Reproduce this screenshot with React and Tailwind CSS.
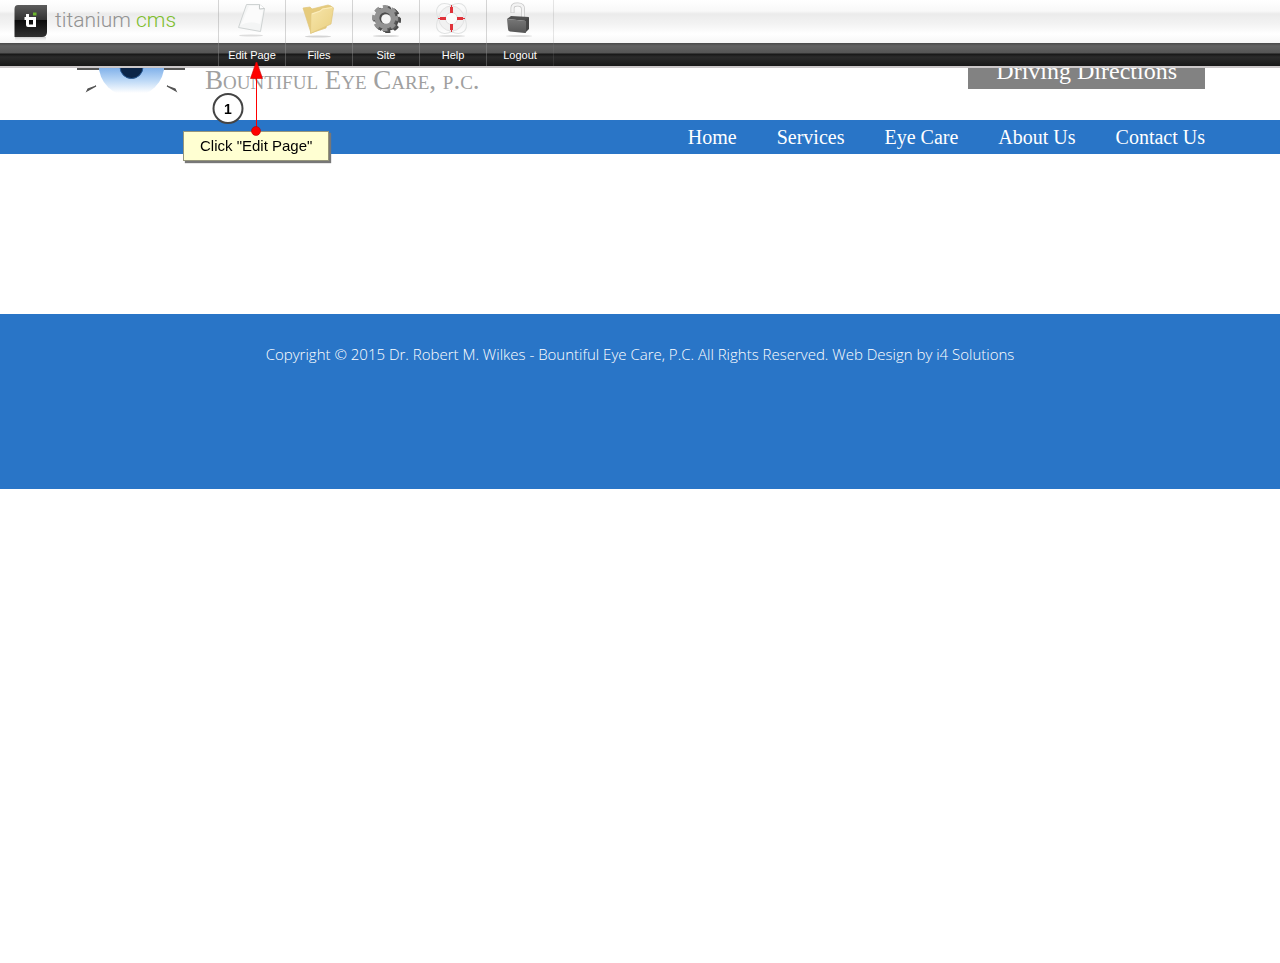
function TitaniumMark() {
  return (
    <svg width="34" height="42" viewBox="0 0 34 42" aria-hidden="true">
      <defs>
        <linearGradient id="mark" x1="0" y1="0" x2="0" y2="1">
          <stop offset="0" stopColor="#5c5c5c" />
          <stop offset="0.46" stopColor="#333" />
          <stop offset="0.48" stopColor="#0c0c0c" />
          <stop offset="1" stopColor="#303030" />
        </linearGradient>
        <linearGradient id="markShade" x1="0" y1="0" x2="0" y2="1">
          <stop offset="0" stopColor="#ccc" />
          <stop offset="1" stopColor="#fff" stopOpacity="0" />
        </linearGradient>
      </defs>
      <rect x="2" y="37" width="31" height="5" fill="url(#markShade)" />
      <path d="M5 5H34V32Q34 37 29 37H1.500V9Q1.500 5 5 5Z" fill="url(#mark)" />
      <path d="M13 14H16V17H23V27H15Q13 27 13 25V20H11.500V17H13ZM16 20V24.500H20V20Z" fill="#fff" fillRule="evenodd" />
      <rect x="20" y="12.500" width="3.500" height="3" fill="#6db52d" />
    </svg>
  );
}

function PageIcon() {
  return (
    <svg width="40" height="40" viewBox="0 0 40 40" aria-hidden="true">
      <ellipse cx="19" cy="35.500" rx="12" ry="1" fill="#dedede" />
      <path d="M14.500 4.500H27.500L32.500 8.500L28.500 31.500L6.500 27.500Z" fill="#f4f5f5" stroke="#cfd3d3" />
      <path d="M17 6H26L27 10H31L28 24Q18 20 9 25Z" fill="#fbfbfb" />
      <path d="M27.500 4.500L27.500 9L32.500 8.500" fill="#fff" stroke="#c4c8c8" />
    </svg>
  );
}

function FolderIcon() {
  return (
    <svg width="40" height="40" viewBox="0 0 40 40" aria-hidden="true">
      <defs>
        <linearGradient id="folder" x1="0" y1="0" x2="1" y2="1">
          <stop offset="0" stopColor="#f7e6ab" />
          <stop offset="1" stopColor="#e9cf80" />
        </linearGradient>
      </defs>
      <ellipse cx="19" cy="36.500" rx="13" ry="1" fill="#d4d4d4" />
      <path d="M4 8L11 7L13 9L29 5L32 6L27 28L12 33Z" fill="#e6cb7c" stroke="#e0c67c" strokeWidth=".7" />
      <path d="M12 13L21 10L23 8L33 6.500L34.500 8L32 24L11.500 33.500Z" fill="url(#folder)" stroke="#e0c67c" strokeWidth=".7" />
      <path d="M13 14L21.500 11L23.500 9L33 7.500" fill="none" stroke="#fff1c4" strokeWidth=".8" />
    </svg>
  );
}

function Cog({ x, y, color }) {
  return (
    <g transform={`translate(${x} ${y})`} fill="none" stroke={color}>
      <circle r="8" strokeWidth="5" />
      <circle r="11" strokeWidth="4" strokeDasharray="4.900 3.740" strokeDashoffset="2.400" />
    </g>
  );
}

function GearIcon() {
  return (
    <svg width="40" height="40" viewBox="0 0 40 40" aria-hidden="true">
      <ellipse cx="20" cy="36" rx="13" ry="1" fill="#d8d8d8" />
      <Cog x={22} y={20} color="#484848" />
      <Cog x={21} y={19} color="#505050" />
      <Cog x={20} y={19} color="#5c5c5c" />
      <Cog x={19} y={18} color="#929292" />
      <circle cx="19" cy="18" r="5.500" fill="#4d4d4d" />
      <circle cx="20" cy="19" r="4.800" fill="#f6f6f6" />
    </svg>
  );
}

function HelpIcon() {
  return (
    <svg width="40" height="40" viewBox="0 0 40 40" aria-hidden="true">
      <ellipse cx="19" cy="36" rx="13" ry="1" fill="#dedede" />
      <g fill="none" stroke="#e0e2e2">
        <ellipse cx="18.500" cy="18.500" rx="18" ry="11" transform="rotate(45 18.500 18.500)" />
        <ellipse cx="18.500" cy="18.500" rx="18" ry="11" transform="rotate(-45 18.500 18.500)" />
      </g>
      <circle cx="18.500" cy="18.500" r="9.500" fill="none" stroke="#f1f1f1" strokeWidth="6" />
      <circle cx="18.500" cy="18.500" r="12.500" fill="none" stroke="#e3e3e3" />
      <circle cx="18.500" cy="18.500" r="6" fill="#fbfbfb" stroke="#e0e0e0" />
      <g stroke="#e0323a" strokeWidth="3">
        <path d="M18.500 7V13M18.500 24V30M7 18.500H13M24 18.500H30" />
        <path d="M18.500 5V8M18.500 29V32M5 18.500H8M29 18.500H32" strokeWidth="1" />
      </g>
    </svg>
  );
}

function LockIcon() {
  return (
    <svg width="40" height="40" viewBox="0 0 40 40" aria-hidden="true">
      <defs>
        <linearGradient id="lock" x1="0" y1="0" x2="0" y2="1">
          <stop offset="0" stopColor="#777" />
          <stop offset="1" stopColor="#565656" />
        </linearGradient>
      </defs>
      <ellipse cx="19" cy="36" rx="13" ry="1" fill="#dedede" />
      <path d="M12.500 13V8Q12.500 4.500 17 4.500H18Q23 4.500 23 9V18" fill="none" stroke="#c6c6c6" strokeWidth="4" />
      <path d="M12.500 12.500V8Q12.500 4.500 17 4.500H18Q23 4.500 23 9V18" fill="none" stroke="#f3f3f3" strokeWidth="2.500" />
      <path d="M7 19L11 16L29 17L26 21Z" fill="#505050" />
      <path d="M25 20L29 17V29L25 33Z" fill="#464646" />
      <path d="M7 19L26 21V32Q26 33 25 33L10 31.500Q8 31 8 29Z" fill="url(#lock)" />
    </svg>
  );
}

function EyeLogo() {
  return (
    <svg width="110" height="60" viewBox="0 0 110 60" aria-hidden="true">
      <defs>
        <linearGradient id="iris" gradientUnits="userSpaceOnUse" x1="0" y1="32" x2="0" y2="57">
          <stop offset="0" stopColor="#82b2ea" />
          <stop offset="0.5" stopColor="#bcd8f6" />
          <stop offset="1" stopColor="#fff" />
        </linearGradient>
      </defs>
      <circle cx="56.500" cy="28" r="33" fill="url(#iris)" />
      <circle cx="56.500" cy="31" r="11.500" fill="#0b2548" stroke="#285993" />
      <path d="M2 33H24M89 33H111" stroke="#555" strokeWidth="2" />
      <path d="M12 55L21 50L13 53ZM101 55L92 50L100 53Z" fill="#444" stroke="#555" strokeWidth="1.200" />
    </svg>
  );
}

const tools = [
  { label: 'Edit Page', Icon: PageIcon },
  { label: 'Files', Icon: FolderIcon },
  { label: 'Site', Icon: GearIcon },
  { label: 'Help', Icon: HelpIcon },
  { label: 'Logout', Icon: LockIcon },
];

const links = ['Home', 'Services', 'Eye Care', 'About Us', 'Contact Us'];

function AdminBar() {
  return (
    <header className="fixed inset-x-0 top-0 z-10 flex h-[68px] border-b-2 border-[#cbc7c8] bg-[linear-gradient(to_bottom,#fff_0px,#f8f8f8_11px,#ebebeb_14px,#f3f3f3_24px,#fff_34px,#f6f6f6_43px,#494949_43px,#626262_46px,#555_53px,#161616_54px,#2b2b2b_57px,#181818_66px)]">
      <a href="#titanium" className="flex h-[42px] w-[218px] items-center gap-2 pl-[13px]">
        <TitaniumMark />
        <span className="font-['Roboto',sans-serif] text-[21px] font-light text-[#929292]">
          titanium <span className="text-[#7cbd2c]">cms</span>
        </span>
      </a>
      <nav className="flex border-r border-[#80808033]">
        {tools.map(({ label, Icon }) => (
          <button
            key={label}
            type="button"
            className="flex w-[67px] flex-col items-center justify-between border-l border-[#9996] pb-1 font-['Liberation_Sans',sans-serif] text-[11px] leading-[14px] text-white"
          >
            <Icon />
            {label}
          </button>
        ))}
      </nav>
    </header>
  );
}

function Callout() {
  return (
    <div className="absolute top-[62px] left-[183px] z-20">
      <svg width="90" height="76" viewBox="0 0 90 76" className="relative z-10" aria-hidden="true">
        <circle cx="45" cy="46.500" r="14.500" fill="#fff" stroke="#444" strokeWidth="2" />
        <text x="45" y="52" textAnchor="middle" fontFamily="Liberation Sans, sans-serif" fontSize="14" fontWeight="700">1</text>
        <path d="M73.500 14V69" stroke="#f00" />
        <path d="M73.500 -1L79.500 16.500H67.500Z" fill="#f00" stroke="#c00" strokeWidth=".6" />
        <circle cx="73" cy="69" r="4.500" fill="#f00" stroke="#b00" strokeWidth=".6" />
      </svg>
      <p className="-mt-[7px] border border-[#96967a] bg-[#ffffd2] px-4 font-['Liberation_Sans',sans-serif] text-[15px] leading-7 whitespace-nowrap shadow-[2px_2px_1px_#777]">
        Click "Edit Page"
      </p>
    </div>
  );
}

export default function App() {
  return (
    <div className="relative min-h-screen bg-white font-['Liberation_Serif',serif]">
      <AdminBar />
      <div className="flex h-[120px] items-end justify-between px-[75px] pb-6">
        <div className="flex items-end gap-5">
          <EyeLogo />
          <span className="text-[27px] leading-8 text-[#a0a0a0] [font-variant-caps:small-caps]">Bountiful Eye Care, p.c.</span>
        </div>
        <a href="#directions" className="mb-[7px] bg-[#828282] px-7 pb-1 text-[24px] leading-7 text-white">
          Driving Directions
        </a>
      </div>
      <nav className="flex h-[34px] items-center justify-end gap-10 bg-[#2975c7] px-[75px] text-[20px] text-white">
        {links.map((link) => (
          <a key={link} href={'#' + link}>{link}</a>
        ))}
      </nav>
      <main className="h-40" />
      <footer className="bg-[#2975c7] px-5 pt-[29px] pb-[124px] text-center font-['Open_Sans',sans-serif] text-[15px] leading-[22px] font-light text-white">
        Copyright © 2015 Dr. Robert M. Wilkes - Bountiful Eye Care, P.C. All Rights Reserved. Web Design by i4 Solutions
      </footer>
      <Callout />
    </div>
  );
}
